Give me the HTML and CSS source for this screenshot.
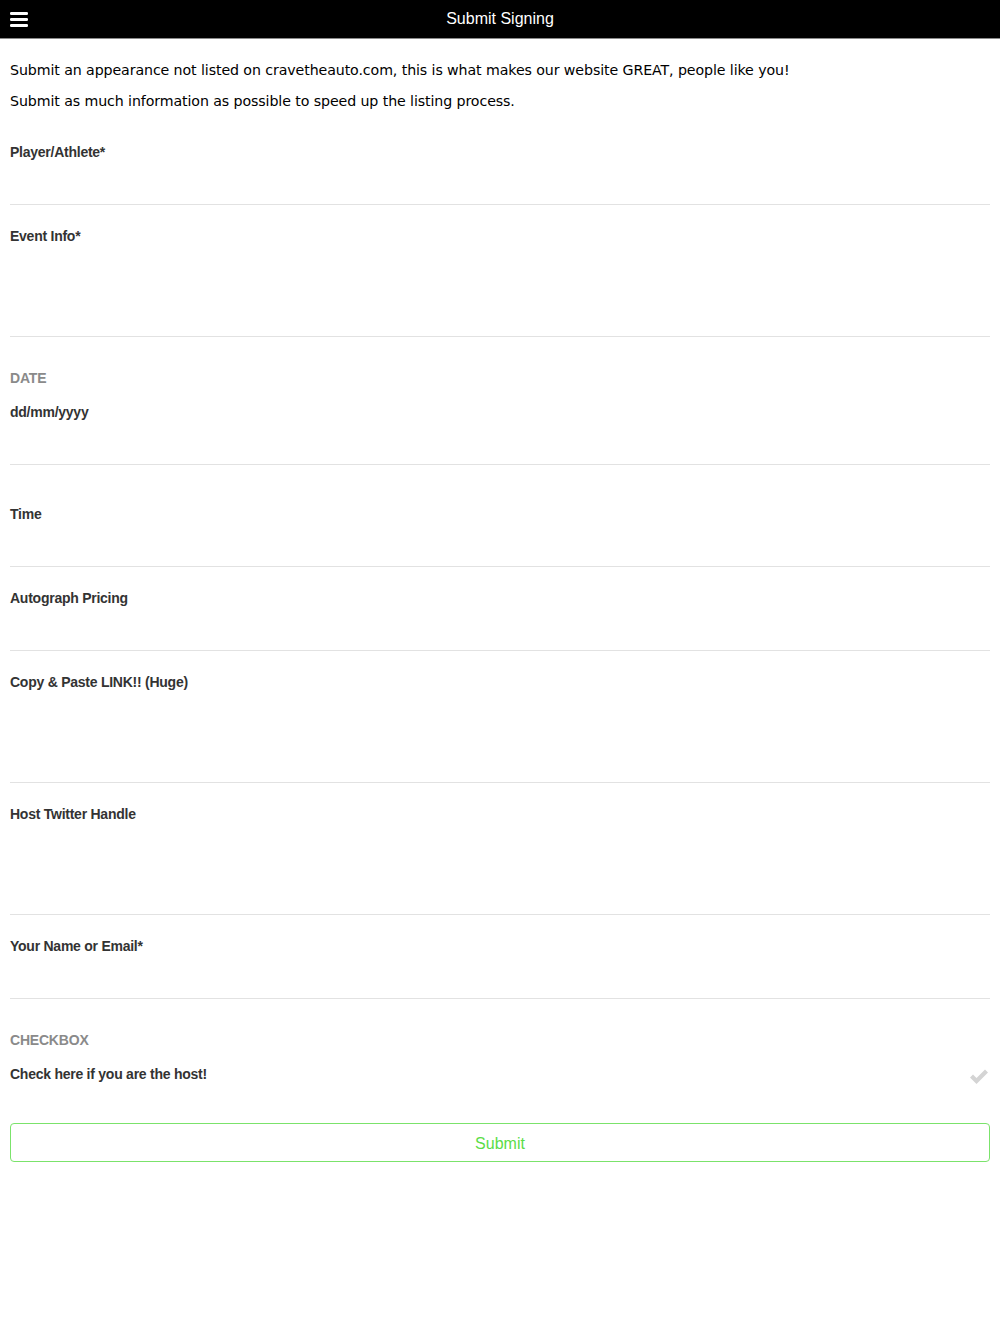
FILE: index.html
```html
<!DOCTYPE html>
<html>
<head>
<meta charset="utf-8">
<link rel="stylesheet" href="styles.css">
</head>
<body>
<header class="topbar">
  <svg class="menu-icon" width="18" height="15" viewBox="0 0 18 15"><rect x="0" y="0" width="18" height="3" rx="1.2" fill="#fff"/><rect x="0" y="6" width="18" height="3" rx="1.2" fill="#fff"/><rect x="0" y="12" width="18" height="3" rx="1.2" fill="#fff"/></svg>
  <h1 class="title">Submit Signing</h1>
</header>
<main class="content">
  <div class="intro">
    <p>Submit an appearance not listed on cravetheauto.com, this is what makes our website GREAT, people like you!</p>
    <p>Submit as much information as possible to speed up the listing process.</p>
  </div>
  <form class="form">
    <div class="field"><label>Player/Athlete*</label><div class="input"></div></div>
    <div class="field"><label>Event Info*</label><div class="input tall"></div></div>
    <div class="field date"><div class="kind">DATE</div><label>dd/mm/yyyy</label><div class="input"></div></div>
    <div class="field time"><label>Time</label><div class="input"></div></div>
    <div class="field"><label>Autograph Pricing</label><div class="input"></div></div>
    <div class="field"><label>Copy &amp; Paste LINK!! (Huge)</label><div class="input tall"></div></div>
    <div class="field"><label>Host Twitter Handle</label><div class="input tall"></div></div>
    <div class="field"><label>Your Name or Email*</label><div class="input"></div></div>
    <div class="checkfield">
      <div class="kind">CHECKBOX</div>
      <div class="checkrow">
        <label>Check here if you are the host!</label>
        <svg class="check" width="20" height="17" viewBox="0 0 20 17"><path d="M1 9.5 L4 6.5 L7.5 10 L16 1.5 L19 4.5 L7.5 16 Z" fill="#d4d4d4"/></svg>
      </div>
    </div>
    <div class="submit">Submit</div>
  </form>
</main>
</body>
</html>
```
FILE: styles.css
```css
* { box-sizing: border-box; }
html, body { margin: 0; padding: 0; background: #fff; }
body { font-family: "Liberation Sans", Arial, sans-serif; color: #333; }
.topbar {
  height: 39px;
  background: #000;
  border-bottom: 1px solid #8a8a8a;
  display: flex;
  align-items: center;
  justify-content: center;
  position: relative;
}
.menu-icon { position: absolute; left: 10px; top: 12px; }
.title { margin: 0; font-size: 16px; font-weight: normal; color: #fff; }
.content { padding: 0 10px; }
.intro { padding-top: 16px; height: 82px; }
.intro p {
  margin: 0;
  font-family: "DejaVu Sans", Tahoma, sans-serif;
  font-size: 14.2px;
  line-height: 31px;
  color: #000;
  letter-spacing: -0.1px;
}
.field { padding-top: 23px; border-bottom: 1px solid #e2e2e2; }
.field label, .checkrow label {
  display: block;
  font-size: 14px;
  font-weight: bold;
  line-height: 16px;
  letter-spacing: -0.25px;
  color: #333;
}
.input { height: 44px; }
.input.tall { height: 92px; }
.kind {
  font-size: 14px;
  font-weight: bold;
  line-height: 16px;
  letter-spacing: -0.2px;
  color: #8a8a8a;
}
.field.date { padding-top: 33px; }
.field.date .kind { margin-bottom: 18px; }
.field.time { padding-top: 41px; }
.checkfield { padding-top: 33px; }
.checkfield .kind { margin-bottom: 18px; }
.checkrow { display: flex; justify-content: space-between; align-items: center; height: 16px; }
.check { margin-top: 4px; margin-right: 1px; }
.submit {
  margin-top: 41px;
  height: 39px;
  border: 1px solid #7be36b;
  border-radius: 4px;
  color: #5bdc48;
  font-size: 16px;
  padding-top: 2px;
  display: flex;
  align-items: center;
  justify-content: center;
}
```
